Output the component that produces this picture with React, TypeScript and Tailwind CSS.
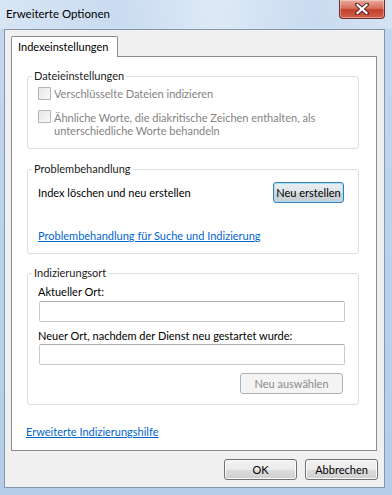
import React from "react";

const font = { fontFamily: 'Lato, "Noto Sans", sans-serif' };

function Checkbox() {
  return (
    <div className="w-[13px] h-[13px] shrink-0 border border-[#b4b4b4] bg-gradient-to-br from-[#e8e8e8] to-[#f8f8f8] rounded-[1px]" />
  );
}

function Group({
  label,
  className,
  children,
}: {
  label: string;
  className: string;
  children: React.ReactNode;
}) {
  return (
    <div className={`relative ml-[15px] w-[332px] border border-[#d5dfe5] rounded-[3px] ${className}`}>
      <span className="absolute left-[4px] top-[-8px] bg-white px-[2px] leading-[14px] text-[#1b1b1b]">
        {label}
      </span>
      {children}
    </div>
  );
}

function Button({
  children,
  w,
  variant = "normal",
}: {
  children: React.ReactNode;
  w: string;
  variant?: "normal" | "focus" | "disabled";
}) {
  if (variant === "disabled") {
    return (
      <div
        className={`${w} h-[21px] shrink-0 flex items-center justify-center whitespace-nowrap border border-[#adb2b5] rounded-[3px] bg-[#f4f4f4] text-[#8b8b8b] leading-[14px]`}
      >
        {children}
      </div>
    );
  }
  if (variant === "focus") {
    return (
      <div
        className={`${w} h-[21px] shrink-0 flex items-center justify-center whitespace-nowrap border border-[#3c7fb1] rounded-[3px] bg-[linear-gradient(#e8eff3_0%,#dde4e8_50%,#cdd5d9_51%,#c8d0d4_100%)] shadow-[inset_0_0_0_1px_#a6dcf4] text-black leading-[14px]`}
      >
        {children}
      </div>
    );
  }
  return (
    <div
      className={`${w} h-[21px] shrink-0 flex items-center justify-center whitespace-nowrap border border-[#707070] rounded-[3px] bg-[linear-gradient(#f2f2f2_0%,#ebebeb_50%,#dddddd_51%,#cfcfcf_100%)] shadow-[inset_0_0_0_1px_#fbfbfb] text-black leading-[14px]`}
    >
      {children}
    </div>
  );
}

function Input() {
  return (
    <div className="ml-[11px] w-[306px] h-[21px] border border-[#c5cbd2] border-t-[#abadb3] rounded-[2px] bg-white" />
  );
}

export default function App() {
  return (
    <div
      className="relative w-[392px] h-[495px] overflow-hidden text-[11px] bg-[linear-gradient(180deg,#c3d8ef_0%,#bcd3ec_40%,#b5cde9_100%)]"
      style={font}
    >
      {/* title bar */}
      <div className="h-[29px] flex items-center pl-[6px] bg-[linear-gradient(90deg,rgba(255,255,255,0.35)_0%,rgba(255,255,255,0.1)_30%,rgba(255,255,255,0.45)_55%,rgba(255,255,255,0.1)_80%,rgba(255,255,255,0.3)_100%)]">
        <span className="text-black leading-[16px] text-[11.5px] -mt-[1px]">Erweiterte Optionen</span>
      </div>

      {/* close button */}
      <div className="absolute left-[339px] top-0 w-[46px] h-[19px] rounded-b-[4px] border border-t-0 border-[#6d2f2b] bg-[linear-gradient(180deg,#e9a99c_0%,#d9705f_45%,#c2402c_55%,#d3604a_100%)] shadow-[inset_0_0_0_1px_rgba(255,255,255,0.35)] flex items-center justify-center">
        <svg width="14" height="12" viewBox="0 0 14 12">
          <path
            d="M2 1.5 L12 10.5 M12 1.5 L2 10.5"
            stroke="#5a2a26"
            strokeWidth="4"
            strokeLinecap="square"
          />
          <path
            d="M2.5 2 L11.5 10 M11.5 2 L2.5 10"
            stroke="#ffffff"
            strokeWidth="2.2"
            strokeLinecap="square"
          />
        </svg>
      </div>

      {/* client area */}
      <div className="ml-[4px] w-[381px] h-[459px] border border-[#8597ab] bg-[#f0f0f0] flex flex-col">
        {/* tab header */}
        <div className="ml-[6px] mt-[6px] w-[107px] h-[21px] -mb-[1px] relative z-10 border border-b-0 border-[#898c95] bg-white rounded-t-[2px] pl-[6px] flex items-center">
          <span className="leading-[14px] text-black">Indexeinstellungen</span>
        </div>

        {/* tab panel */}
        <div className="ml-[6px] w-[366px] h-[395px] border border-[#898c95] bg-white flex flex-col">
          {/* Dateieinstellungen */}
          <Group label="Dateieinstellungen" className="mt-[19px] h-[73px]">
            <div className="pl-[10px] pt-[10px] flex flex-col text-[#838383]">
              <div className="flex items-start gap-[3px]">
                <Checkbox />
                <span className="leading-[13px]">Verschlüsselte Dateien indizieren</span>
              </div>
              <div className="flex items-start gap-[3px] mt-[10px]">
                <Checkbox />
                <span className="leading-[13px] mt-[1px] whitespace-nowrap">
                  Ähnliche Worte, die diakritische Zeichen enthalten, als
                  <br />
                  unterschiedliche Worte behandeln
                </span>
              </div>
            </div>
          </Group>

          {/* Problembehandlung */}
          <Group label="Problembehandlung" className="mt-[20px] h-[85px]">
            <div className="pl-[10px] pr-[14px] pt-[12px] flex items-center justify-between">
              <span className="leading-[14px] text-black">Index löschen und neu erstellen</span>
              <Button w="w-[71px]" variant="focus">
                Neu erstellen
              </Button>
            </div>
            <div className="pl-[10px] mt-[26px] leading-[14px]">
              <span className="text-[#0066cc] underline underline-offset-[1px]">
                Problembehandlung für Suche und Indizierung
              </span>
            </div>
          </Group>

          {/* Indizierungsort */}
          <Group label="Indizierungsort" className="mt-[19px] h-[132px]">
            <div className="pt-[11px] flex flex-col">
              <span className="pl-[10px] leading-[14px] text-black">Aktueller Ort:</span>
              <div className="mt-[2px]">
                <Input />
              </div>
              <span className="pl-[10px] mt-[7px] leading-[14px] text-black">
                Neuer Ort, nachdem der Dienst neu gestartet wurde:
              </span>
              <div className="mt-[1px]">
                <Input />
              </div>
              <div className="mt-[8px] ml-[212px]">
                <Button w="w-[103px]" variant="disabled">
                  Neu auswählen
                </Button>
              </div>
            </div>
          </Group>

          <div className="mt-[19px] ml-[14px] leading-[16px]">
            <span className="text-[#0066cc] underline underline-offset-[1px]">
              Erweiterte Indizierungshilfe
            </span>
          </div>
        </div>

        {/* bottom buttons */}
        <div className="mt-[8px] pr-[6px] flex justify-end gap-[8px]">
          <Button w="w-[73px]">OK</Button>
          <Button w="w-[73px]">Abbrechen</Button>
        </div>
      </div>
    </div>
  );
}
